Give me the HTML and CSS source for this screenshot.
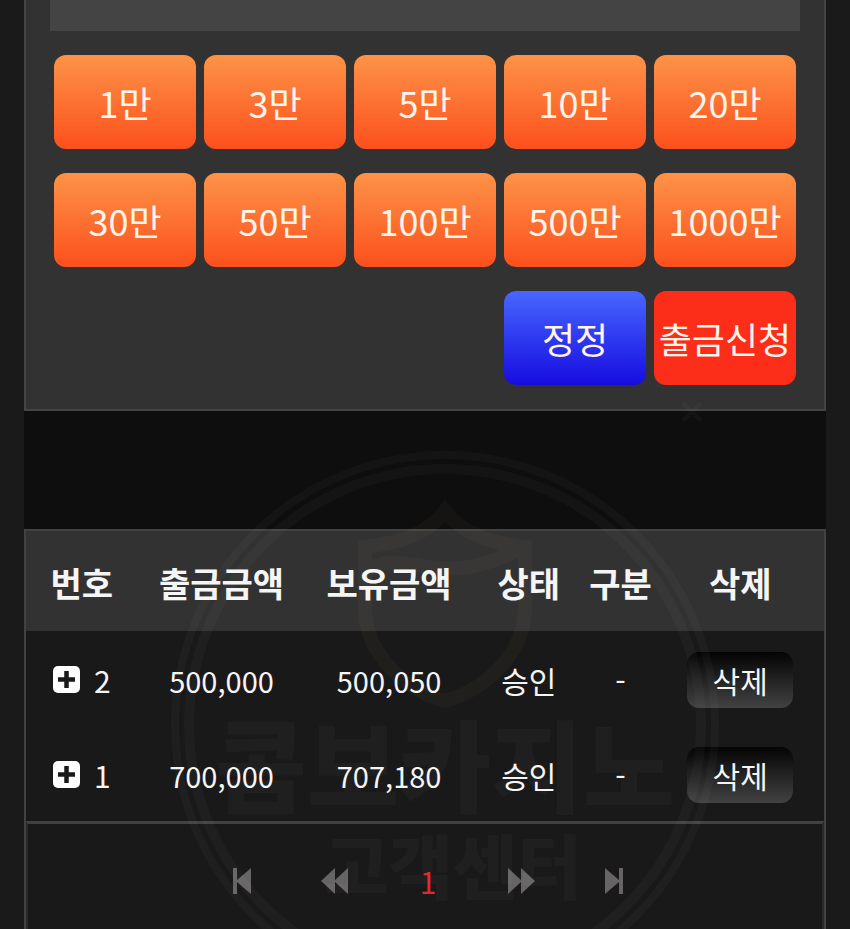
FILE: index.html
```
<!DOCTYPE html>
<html lang="ko">

<head>
  <meta charset="UTF-8">
  <meta name="viewport" content="width=device-width, initial-scale=1.0">
  <title>출금신청</title>
  <link rel="stylesheet" href="styles.css">
</head>

<body>

  <main class="page">

    <!-- withdraw form -->
    <form class="withdraw-panel">
      <input type="text" class="amount-input" aria-label="출금금액">
      <div class="amount-grid">
        <button type="button" class="btn">1만</button>
        <button type="button" class="btn">3만</button>
        <button type="button" class="btn">5만</button>
        <button type="button" class="btn">10만</button>
        <button type="button" class="btn">20만</button>
        <button type="button" class="btn">30만</button>
        <button type="button" class="btn">50만</button>
        <button type="button" class="btn">100만</button>
        <button type="button" class="btn">500만</button>
        <button type="button" class="btn">1000만</button>
        <button type="reset" class="btn btn-reset">정정</button>
        <button type="button" class="btn btn-submit">출금신청</button>
      </div>
    </form>

    <!-- withdraw history -->
    <section class="history">
      <table class="history-table">
        <thead>
          <tr>
            <th class="col-no">번호</th>
            <th class="col-amount">출금금액</th>
            <th class="col-balance">보유금액</th>
            <th class="col-status">상태</th>
            <th class="col-type">구분</th>
            <th class="col-delete">삭제</th>
          </tr>
        </thead>
        <tbody>
          <tr>
            <td>
              <div class="row-no">
                <button type="button" class="expand" aria-label="펼치기">
                  <svg viewBox="0 0 27 27"><rect width="27" height="27" rx="5" fill="#fff" /><path d="M13.500 5v17M5 13.500h17" stroke="#1a1919" stroke-width="4.500" /></svg>
                </button>
                2
              </div>
            </td>
            <td class="money">500,000</td>
            <td class="money">500,050</td>
            <td>승인</td>
            <td>-</td>
            <td><button type="button" class="btn-delete">삭제</button></td>
          </tr>
          <tr>
            <td>
              <div class="row-no">
                <button type="button" class="expand" aria-label="펼치기">
                  <svg viewBox="0 0 27 27"><rect width="27" height="27" rx="5" fill="#fff" /><path d="M13.500 5v17M5 13.500h17" stroke="#1a1919" stroke-width="4.500" /></svg>
                </button>
                1
              </div>
            </td>
            <td class="money">700,000</td>
            <td class="money">707,180</td>
            <td>승인</td>
            <td>-</td>
            <td><button type="button" class="btn-delete">삭제</button></td>
          </tr>
        </tbody>
      </table>

      <!-- pagination -->
      <nav class="pagination" aria-label="페이지">
        <a href="#" aria-label="처음"><svg viewBox="0 0 28 28"><path d="M5 1h4v12L23 1v26L9 15v12H5z" /></svg></a>
        <a href="#" aria-label="이전"><svg viewBox="0 0 28 28"><path d="M0 14L14 1v12L27 1v26L14 15v12z" /></svg></a>
        <a href="#" class="current">1</a>
        <a href="#" aria-label="다음"><svg viewBox="0 0 28 28"><path d="M28 14L14 1v12L1 1v26l13-12v12z" /></svg></a>
        <a href="#" aria-label="마지막"><svg viewBox="0 0 28 28"><path d="M23 1h-4v12L5 1v26l14-12v12h4z" /></svg></a>
      </nav>
    </section>

    <!-- watermark -->
    <svg class="watermark" viewBox="0 0 560 560" aria-hidden="true">
      <g fill="none" stroke="#fff">
        <circle cx="280" cy="280" r="270" stroke-width="8" />
        <circle cx="280" cy="280" r="256" stroke-width="10" />
        <path d="M518-42l18 18M536-42l-18 18" stroke-width="4" />
      </g>
      <g fill="none" stroke="#ffffa0" stroke-width="14">
        <path d="M280 66C260 92 230 98 200 102v60c0 50 44 84 80 94 36-10 80-44 80-94v-60c-30-4-60-10-80-36z" />
        <path d="M202 126c40-26 70 22 152-22" />
      </g>
      <g fill="#fff" text-anchor="middle">
        <text class="mark-title" x="280" y="360">콤보카지노</text>
        <text class="mark-sub" x="288" y="449">고객센터</text>
      </g>
    </svg>
  </main>

</body>

</html>
```
FILE: styles.css
```
* {
  box-sizing: border-box;
}

body {
  margin: 0;
  background-color: #1b1a1a;
  color: #f5f5f5;
  font-family: "Noto Sans CJK KR", "Noto Sans", sans-serif;
  font-size: 30px;
}

button {
  border: 0;
  padding: 0;
  color: inherit;
  font-family: inherit;
  cursor: pointer;
}

.page {
  position: relative;
  margin: 0 24px;
  min-height: 100vh;
  background-color: #0f0e0f;
  overflow: hidden;
}

/* withdraw form */
.withdraw-panel {
  padding: 0 24px 24px;
  border: 2px solid #444;
  border-top: 0;
  background-color: #323232;
}

.amount-input {
  display: block;
  width: 100%;
  height: 31px;
  border: 0;
  background-color: #444;
  color: #fff;
}

.amount-grid {
  display: grid;
  grid-template-columns: repeat(5, 1fr);
  gap: 24px 8px;
  padding: 24px 4px 0;
}

.btn {
  height: 94px;
  border-radius: 12px;
  background: linear-gradient(#fd9347, #fc501d);
  color: #fff5ec;
  font-size: 36px;
  line-height: 48px;
  white-space: nowrap;
}

.btn-reset {
  grid-column: 4;
  background: linear-gradient(#4767ff, #170ce0);
}

.btn-submit {
  background: #fd2e19;
}

/* withdraw history */
.history {
  margin-top: 118px;
  border: 2px solid #434242;
  border-bottom: 0;
  background-color: #1a1919;
}

.history-table {
  width: 100%;
  border-collapse: collapse;
  table-layout: fixed;
  text-align: center;
}

.history-table th {
  height: 100px;
  padding: 4px 0 0;
  background-color: #333232;
  font-size: 34px;
  line-height: 48px;
}

.history-table td {
  height: 95px;
  padding: 2px 0 0;
  line-height: 44px;
}

.history-table .money {
  font-size: 29px;
}

.col-no {
  width: 14%;
}

.col-amount {
  width: 21%;
}

.col-balance {
  width: 21%;
}

.col-status {
  width: 14%;
}

.col-type {
  width: 9%;
}

.row-no {
  display: flex;
  align-items: center;
  justify-content: center;
  gap: 14px;
}

.expand {
  width: 27px;
  height: 27px;
  background: none;
}

.expand svg {
  display: block;
}

.btn-delete {
  display: block;
  width: 106px;
  height: 56px;
  margin: 0 auto;
  border-radius: 12px;
  background: linear-gradient(#050404, #434242);
  font-size: 30px;
  line-height: 44px;
}

/* pagination */
.pagination {
  display: flex;
  justify-content: center;
  align-items: center;
  gap: 65px;
  height: 108px;
  padding: 8px 0 0 6px;
  border: 2px solid #2b2a2a;
  border-top: 3px solid #434242;
  border-bottom: 0;
}

.pagination a {
  width: 28px;
  color: #666464;
  text-align: center;
  text-decoration: none;
}

.pagination svg {
  display: block;
  width: 28px;
  height: 28px;
  fill: currentColor;
}

.pagination .current {
  color: #e8262d;
}

/* watermark */
.watermark {
  position: absolute;
  left: 50%;
  bottom: -76px;
  width: 560px;
  margin-left: -260px;
  overflow: visible;
  opacity: 0.025;
  pointer-events: none;
}

.mark-title {
  font-size: 100px;
  font-weight: 900;
}

.mark-sub {
  font-size: 70px;
  font-weight: 900;
}
```
